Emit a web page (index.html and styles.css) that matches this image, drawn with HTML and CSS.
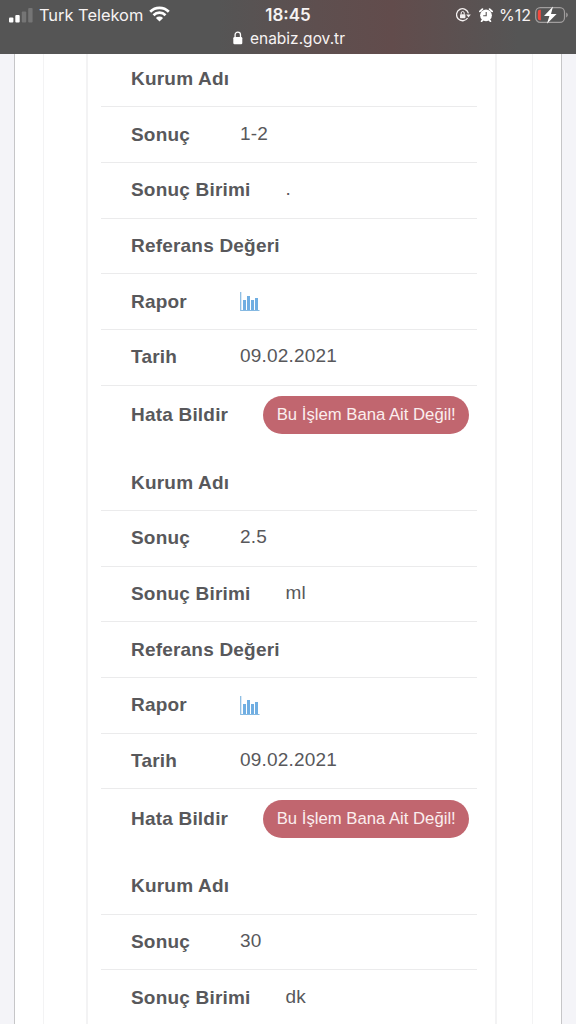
FILE: index.html
```html
<!DOCTYPE html>
<html lang="tr">
<head>
    <meta charset="UTF-8">
    <meta name="viewport" content="width=device-width, initial-scale=1.0">
    <title>e-Nabız</title>
    <link rel="stylesheet" href="styles.css">
</head>
<body>
    <header class="header">
        <div class="status-bar">
            <div class="status-left">
                <svg class="signal" width="25" height="16" viewBox="0 0 25 16">
                    <rect x="0" y="10.5" width="4.4" height="5" rx="1" fill="#fff"/>
                    <rect x="6.3" y="8" width="4.4" height="7.5" rx="1" fill="#fff"/>
                    <rect x="12.8" y="4.5" width="4.4" height="11" rx="1" fill="#757575"/>
                    <rect x="19.2" y="1" width="4.4" height="14.5" rx="1" fill="#757575"/>
                </svg>
                <span class="carrier">Turk Telekom</span>
                <svg class="wifi" width="21" height="16" viewBox="0 0 21 16">
                    <path d="M1.2 5.8a13.2 13.2 0 0 1 18.6 0M4.5 9.2a8.5 8.5 0 0 1 12 0" fill="none" stroke="#fff" stroke-width="2.7"/>
                    <path d="M10.5 15.6l-3.6-3.7a5.1 5.1 0 0 1 7.2 0z" fill="#fff"/>
                </svg>
            </div>
            <div class="clock">18:45</div>
            <div class="status-right">
                <svg class="rotation" width="15" height="14" viewBox="0 0 15 14">
                    <path d="M12.4 5.4A6 6 0 1 0 11.6 10" fill="none" stroke="#f4f0f0" stroke-width="1.3"/>
                    <path d="M10.2 6.4h4.6l-2.3 3.2z" fill="#f4f0f0"/>
                    <rect x="4" y="6.2" width="5.4" height="4" rx=".6" fill="#f4f0f0"/>
                    <path d="M5.2 6.4V5a1.5 1.5 0 0 1 3 0v1.4" fill="none" stroke="#f4f0f0"/>
                </svg>
                <svg class="alarm" width="14" height="14" viewBox="0 0 14 14">
                    <circle cx="7" cy="7.3" r="5.9" fill="#fff"/>
                    <path d="M.9 3.4L3.4 1.1M13.1 3.4L10.6 1.1M2.6 13.2l1.6-2M11.4 13.2l-1.6-2" stroke="#fff" stroke-width="1.8" stroke-linecap="round"/>
                    <path d="M7.2 3.9v3.9H4.2" fill="none" stroke="#595555" stroke-width="1.1"/>
                </svg>
                <span class="percent">%12</span>
                <svg class="battery" width="34" height="20" viewBox="0 0 34 20">
                    <rect x=".7" y="2.7" width="28.8" height="14.6" rx="4.6" fill="none" stroke="#a19e9e" stroke-width="1.2"/>
                    <path d="M31.2 7.6c2.1.8 2.1 4 0 4.8z" fill="#a19e9e"/>
                    <path d="M5.8 4.8v10.4H4.8a2 2 0 0 1-2-2V6.8a2 2 0 0 1 2-2z" fill="#f2493e"/>
                    <path d="M18 1.6L9 11h5.4l-2.5 7.8L21.6 9H16z" fill="#fff"/>
                </svg>
            </div>
        </div>
        <div class="address">
            <svg width="10" height="14" viewBox="0 0 10 14">
                <rect x=".3" y="6" width="9" height="7.3" rx="1.2" fill="#fff"/>
                <path d="M2.1 6.5V3.8a2.7 2.7 0 0 1 5.4 0v2.7" fill="none" stroke="#fff" stroke-width="1.3"/>
            </svg>
            <span>enabiz.gov.tr</span>
        </div>
    </header>

    <main class="page">
        <div class="panel">
            <div class="card">
                <div class="results">
                    <section class="result">
                        <div class="row"><span class="label">Kurum Adı</span></div>
                        <div class="row"><span class="label">Sonuç</span><span class="value">1-2</span></div>
                        <div class="row"><span class="label">Sonuç Birimi</span><span class="value">.</span></div>
                        <div class="row"><span class="label">Referans Değeri</span></div>
                        <div class="row">
                            <span class="label">Rapor</span>
                            <svg class="chart" width="20" height="21" viewBox="0 0 20 21">
                                <path d="M.7 1v18.5H19.5" fill="none" stroke="#85b9e2" stroke-width="1.2"/>
                                <path d="M3 9h3v10H3zM7 5h3v14H7zM11 9h3v10h-3zM15 7h3v12h-3z" fill="#70aee2"/>
                            </svg>
                        </div>
                        <div class="row"><span class="label">Tarih</span><span class="value">09.02.2021</span></div>
                        <div class="row row-report"><span class="label">Hata Bildir</span><button class="btn" type="button">Bu İşlem Bana Ait Değil!</button></div>
                    </section>

                    <section class="result">
                        <div class="row"><span class="label">Kurum Adı</span></div>
                        <div class="row"><span class="label">Sonuç</span><span class="value">2.5</span></div>
                        <div class="row"><span class="label">Sonuç Birimi</span><span class="value">ml</span></div>
                        <div class="row"><span class="label">Referans Değeri</span></div>
                        <div class="row">
                            <span class="label">Rapor</span>
                            <svg class="chart" width="20" height="21" viewBox="0 0 20 21">
                                <path d="M.7 1v18.5H19.5" fill="none" stroke="#85b9e2" stroke-width="1.2"/>
                                <path d="M3 9h3v10H3zM7 5h3v14H7zM11 9h3v10h-3zM15 7h3v12h-3z" fill="#70aee2"/>
                            </svg>
                        </div>
                        <div class="row"><span class="label">Tarih</span><span class="value">09.02.2021</span></div>
                        <div class="row row-report"><span class="label">Hata Bildir</span><button class="btn" type="button">Bu İşlem Bana Ait Değil!</button></div>
                    </section>

                    <section class="result">
                        <div class="row"><span class="label">Kurum Adı</span></div>
                        <div class="row"><span class="label">Sonuç</span><span class="value">30</span></div>
                        <div class="row"><span class="label">Sonuç Birimi</span><span class="value">dk</span></div>
                    </section>
                </div>
            </div>
        </div>
    </main>
</body>
</html>
```

FILE: styles.css
```css
* {
    margin: 0;
    padding: 0;
    box-sizing: border-box;
}

body {
    height: 1024px;
    display: flex;
    flex-direction: column;
    overflow: hidden;
    background-color: #f4f4f8;
    font-family: "Liberation Sans", Arial, sans-serif;
    color: #58585b;
}

/* status bar and address */
.header {
    flex: none;
    height: 54px;
    background: linear-gradient(90deg, #555 0%, #555 38%, #5e4f4f 55%, #624c4c 68%, #5b5151 80%, #555 90%);
    color: #f7f3f3;
    font-family: Inter, sans-serif;
}

.status-bar {
    height: 29px;
    padding: 0 7px 0 9px;
    display: grid;
    grid-template-columns: 1fr auto 1fr;
    align-items: center;
}

.status-left,
.status-right {
    display: flex;
    align-items: center;
}

.status-right {
    justify-content: flex-end;
}

.carrier {
    margin: 0 6px 0 5px;
    font-size: 16.4px;
}

.wifi {
    margin-top: -2px;
}

.clock {
    margin-left: -2px;
    font-size: 17px;
    font-weight: 600;
}

.alarm {
    margin: 0 6px 0 8px;
}

.percent {
    margin-right: 4px;
    font-size: 16px;
}

.address {
    height: 18px;
    padding-left: 2px;
    display: flex;
    align-items: center;
    justify-content: center;
    gap: 7px;
    font-size: 15.5px;
}

/* page frame */
.page {
    flex: 1;
    min-height: 0;
    margin: 0 14px;
    padding: 0 28px;
    overflow: hidden;
    background-color: #fff;
    border-left: 1px solid #c6c6c8;
    border-right: 1px solid #c6c6c8;
}

.panel {
    height: 100%;
    padding: 0 35px 0 42px;
    border-left: 1px solid #f3f3f4;
    border-right: 1px solid #f3f3f4;
}

.card {
    display: flow-root;
    height: 100%;
    padding: 0 18px 0 13px;
    border-left: 2px solid #f3f3f4;
    border-right: 2px solid #f3f3f4;
}

/* results */
.results {
    margin-top: -2.4px;
}

.row {
    height: 55.7px;
    padding-left: 30px;
    display: flex;
    align-items: center;
    border-bottom: 1px solid #ebebec;
    white-space: nowrap;
}

.row-report {
    height: 69.5px;
    padding-bottom: 11px;
    border-bottom: none;
}

.label {
    min-width: 109px;
    padding-right: 35px;
    font-size: 19px;
    font-weight: bold;
    letter-spacing: 0.2px;
}

.value {
    margin-top: -2px;
    font-size: 19px;
    letter-spacing: 0.2px;
}

.btn {
    height: 38px;
    padding: 0 13.5px;
    border: none;
    border-radius: 19px;
    background-color: #c1666f;
    color: #fbeeee;
    font-family: inherit;
    font-size: 16.7px;
}
```
